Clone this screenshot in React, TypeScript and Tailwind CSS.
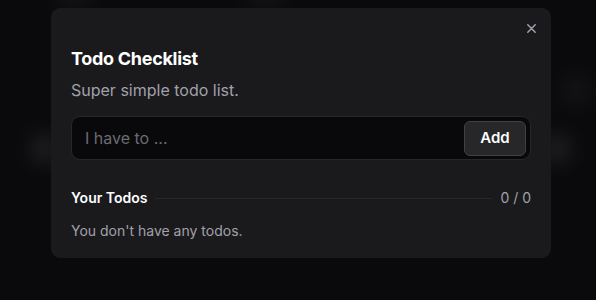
import React from "react";

const Glow = ({ className }: { className: string }) => (
  <div className={`absolute rounded-full bg-white blur-md ${className}`} />
);

export default function App() {
  return (
    <div
      className="relative w-[596px] h-[300px] overflow-hidden bg-[#0a0a0c]"
      style={{ fontFamily: "Inter, 'Liberation Sans', sans-serif" }}
    >
      {/* blurred backdrop */}
      <Glow className="left-[36px] top-[140px] w-[18px] h-[18px] opacity-25" />
      <Glow className="left-[548px] top-[140px] w-[18px] h-[18px] opacity-25" />
      <Glow className="left-[566px] top-[80px] w-[20px] h-[20px] opacity-10" />
      <Glow className="left-[60px] top-[-10px] w-[30px] h-[12px] opacity-10" />
      <Glow className="left-[250px] top-[-10px] w-[30px] h-[12px] opacity-10" />

      <div className="relative ml-[51px] mt-[8px] w-[500px] rounded-[9px] bg-[#1a1a1d] px-5 pt-[37px] pb-[17px]">
        <button className="absolute right-[7px] top-[7px] flex h-[26px] w-[26px] items-center justify-center text-[#a1a1aa]">
          <svg width="9" height="9" viewBox="0 0 9 9" fill="none">
            <path d="M0.8 0.8L8.2 8.2M8.2 0.8L0.8 8.2" stroke="currentColor" strokeWidth="1.5" strokeLinecap="round" />
          </svg>
        </button>

        <h2 className="text-lg font-bold leading-7 tracking-[-0.3px] text-white">Todo Checklist</h2>
        <p className="mt-[5px] text-base leading-6 text-[#a1a1aa]">Super simple todo list.</p>

        <div className="mt-[14px] flex h-[44px] items-center rounded-[9px] border border-[#27272a] bg-[#09090b] pl-[13px] pr-[4px]">
          <input
            className="flex-1 bg-transparent text-base text-white outline-none placeholder:text-[#6b6b73]"
            placeholder="I have to ..."
          />
          <button className="h-[35px] w-[62px] rounded-md border border-[#3f3f46] bg-[#27272a] text-[15px] font-semibold text-white">
            Add
          </button>
        </div>

        <div className="mt-[28px] flex items-center gap-[8px]">
          <span className="text-sm font-semibold text-white">Your Todos</span>
          <div className="h-px flex-1 bg-[#27272a]" />
          <span className="text-sm text-[#a1a1aa]">0 / 0</span>
        </div>

        <p className="mt-[13px] text-sm text-[#a1a1aa]">You don't have any todos.</p>
      </div>
    </div>
  );
}
